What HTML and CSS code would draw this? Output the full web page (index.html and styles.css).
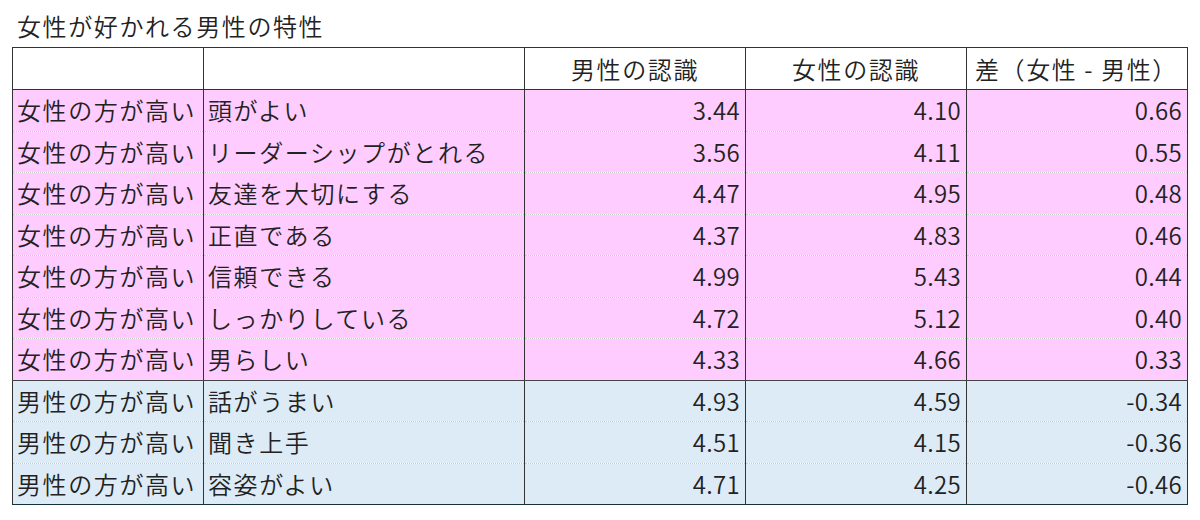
FILE: index.html
```html
<!DOCTYPE html>
<html lang="ja">
<head>
<meta charset="utf-8">
<link rel="stylesheet" href="styles.css">
</head>
<body>
<div class="title">女性が好かれる男性の特性</div>
<table class="sheet">
  <colgroup>
    <col class="c1"><col class="c2"><col class="c3"><col class="c4"><col class="c5">
  </colgroup>
  <thead>
    <tr><th></th><th></th><th class="ctr">男性の認識</th><th class="ctr">女性の認識</th><th class="lft">差（女性 - 男性）</th></tr>
  </thead>
  <tbody class="pink">
    <tr><td>女性の方が高い</td><td>頭がよい</td><td class="num">3.44</td><td class="num">4.10</td><td class="num">0.66</td></tr>
    <tr><td>女性の方が高い</td><td>リーダーシップがとれる</td><td class="num">3.56</td><td class="num">4.11</td><td class="num">0.55</td></tr>
    <tr><td>女性の方が高い</td><td>友達を大切にする</td><td class="num">4.47</td><td class="num">4.95</td><td class="num">0.48</td></tr>
    <tr><td>女性の方が高い</td><td>正直である</td><td class="num">4.37</td><td class="num">4.83</td><td class="num">0.46</td></tr>
    <tr><td>女性の方が高い</td><td>信頼できる</td><td class="num">4.99</td><td class="num">5.43</td><td class="num">0.44</td></tr>
    <tr><td>女性の方が高い</td><td>しっかりしている</td><td class="num">4.72</td><td class="num">5.12</td><td class="num">0.40</td></tr>
    <tr><td>女性の方が高い</td><td>男らしい</td><td class="num">4.33</td><td class="num">4.66</td><td class="num">0.33</td></tr>
  </tbody>
  <tbody class="blue">
    <tr><td>男性の方が高い</td><td>話がうまい</td><td class="num">4.93</td><td class="num">4.59</td><td class="num">-0.34</td></tr>
    <tr><td>男性の方が高い</td><td>聞き上手</td><td class="num">4.51</td><td class="num">4.15</td><td class="num">-0.36</td></tr>
    <tr><td>男性の方が高い</td><td>容姿がよい</td><td class="num">4.71</td><td class="num">4.25</td><td class="num">-0.46</td></tr>
  </tbody>
</table>
</body>
</html>
```
FILE: styles.css
```css
html, body {
  margin: 0;
  padding: 0;
  background: #ffffff;
}
body {
  font-family: "Noto Sans CJK JP", "Noto Sans", sans-serif;
  font-weight: 350;
  color: #222222;
}
.title {
  font-size: 24px;
  letter-spacing: 1.6px;
  line-height: 26px;
  padding: 13px 0 8px 17px;
  height: 26px;
}
.sheet {
  margin-left: 12px;
  border-collapse: collapse;
  table-layout: fixed;
  width: 1175px;
  font-size: 24px;
  letter-spacing: 1.6px;
}
.c1 { width: 191px; }
.c2 { width: 321px; }
.c3 { width: 221px; }
.c4 { width: 221px; }
.c5 { width: 221px; }
.sheet th, .sheet td {
  border-left: 1px solid #333;
  border-right: 1px solid #333;
  padding: 0 5px;
  white-space: nowrap;
  overflow: hidden;
  font-weight: 350;
  line-height: 30px;
}
.sheet thead tr { height: 42px; }
.sheet thead th {
  border-top: 1px solid #333;
  border-bottom: 1px solid #333;
  background: #ffffff;
}
.sheet th.ctr { text-align: center; }
.sheet th.lft { text-align: left; padding-left: 8px; }
.sheet td { text-align: left; padding-left: 4px; }
.sheet td.num { text-align: right; letter-spacing: 0.3px; padding-right: 5px; }
.sheet tbody tr { height: 41.5px; }
.sheet tbody td { border-bottom: 1px dotted #c9c9c9; }
.pink td { background: #ffccff; }
.blue td { background: #ddebf7; }
.pink tr:last-child td { border-bottom: 1px solid #444; }
.blue tr:last-child td { border-bottom: 1px solid #12323c; }
```
